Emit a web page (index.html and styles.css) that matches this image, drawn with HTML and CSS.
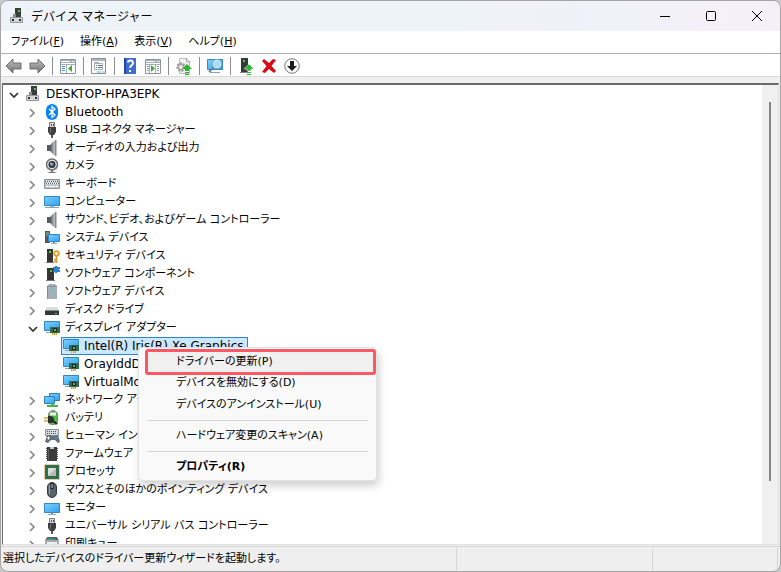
FILE: index.html
```
<!DOCTYPE html>
<html lang="ja">

<head>
    <meta charset="UTF-8">
    <meta name="viewport" content="width=device-width, initial-scale=1">
    <title>デバイス マネージャー</title>
    <link rel="stylesheet" href="styles.css">
</head>

<body>
    <!-- icons -->
    <svg class="sprite" aria-hidden="true">
        <defs>
            <linearGradient id="screen" x1="0" y1="0" x2="1" y2="1">
                <stop offset="0" stop-color="#7fd0ff" />
                <stop offset="1" stop-color="#2ea0ee" />
            </linearGradient>
            <linearGradient id="metal" x1="0" y1="0" x2="1" y2="0">
                <stop offset="0" stop-color="#54585c" />
                <stop offset="1" stop-color="#c4c8cc" />
            </linearGradient>
            <linearGradient id="arrow" x1="0" y1="0" x2="0" y2="1">
                <stop offset="0" stop-color="#c2c2c2" />
                <stop offset="1" stop-color="#707070" />
            </linearGradient>
        </defs>
        <symbol id="i-right" viewBox="0 0 16 16">
            <path d="M5 5l4 4-4 4" fill="none" stroke="#8a8a8a" stroke-width="1.7" />
        </symbol>
        <symbol id="i-down" viewBox="0 0 16 16">
            <path d="M4 7l4 4 4-4" fill="none" stroke="#333" stroke-width="1.7" />
        </symbol>
        <symbol id="i-pc" viewBox="0 0 16 16">
            <path d="M6 0h6v10H6z" fill="#3c3c3c" />
            <path d="M9 2h2v2H9z" fill="#34d943" />
            <path d="M4 6h3v4H4z" fill="#8b8e91" />
            <path d="M1.500 9.500h12v5h-12z" fill="#d5d7d9" stroke="#95989b" />
            <path d="M3 11h2v2H3zM10 11h2v2h-2z" fill="#2d2d2d" />
        </symbol>
        <symbol id="i-bluetooth" viewBox="0 0 16 16">
            <rect x="2" width="12" height="16" rx="6" fill="#0a84f0" />
            <path d="M5 5l6 6-3 2.500V2.500L11 5l-6 6" fill="none" stroke="#fff" stroke-width="1.200" />
        </symbol>
        <symbol id="i-usb" viewBox="0 0 16 16">
            <path d="M5.500.5h5v5h-5z" fill="#ddd" stroke="#777" />
            <path d="M7 2h1v2H7zM9 2h1v2H9z" fill="#555" />
            <path d="M4 5h8v5l-2 3H6l-2-3z" fill="#3f3f3f" />
            <path d="M6 6h1v5H6z" fill="#777" />
            <path d="M7 13h2v3H7z" fill="#555" />
        </symbol>
        <symbol id="i-speaker" viewBox="0 0 16 16">
            <path d="M3 5h3v6H3z" fill="#55585c" />
            <path d="M6 5l5-5v16l-5-5z" fill="url(#metal)" />
            <path d="M11 0h1.500v16H11z" fill="#85898d" />
        </symbol>
        <symbol id="i-camera" viewBox="0 0 16 16">
            <path d="M7 12h2v2H7z" fill="#888" />
            <path d="M3 15q5-3 10 0z" fill="#777" />
            <circle cx="8" cy="6.500" r="5.500" fill="#e3e3e3" stroke="#6f6f6f" stroke-width="1.500" />
            <circle cx="8" cy="6.500" r="3.500" fill="#2d3238" />
            <circle cx="8" cy="6.500" r="1.800" fill="#5d86a8" />
            <circle cx="7" cy="5.500" r=".8" fill="#fff" />
        </symbol>
        <symbol id="i-keyboard" viewBox="0 0 16 16">
            <path d="M.5 3.500h15v9H.5z" fill="#c3c8cd" stroke="#8b9197" />
            <path d="M2 5.500h12M3 7.500h11" stroke="#fff" stroke-dasharray="1 1" />
            <path d="M1 5.500h14M2 7.500h13" stroke="#5c6268" stroke-dasharray="1 1" />
            <path d="M2 10.500h2M5 10.500h6M12 10.500h2" stroke="#fff" />
        </symbol>
        <symbol id="i-computer" viewBox="0 0 16 16">
            <path d="M0 2h16v10H0z" fill="url(#screen)" />
            <path d="M.5 2.500h15v9H.5z" fill="none" stroke="#3389c4" />
            <path d="M6 12h4v1H6z" fill="#9fb3c2" />
            <path d="M1 13.500h14" stroke="#8da3b3" />
        </symbol>
        <symbol id="i-monitor" viewBox="0 0 16 16">
            <path d="M.5 3.500h15v9H.5z" fill="url(#screen)" stroke="#3389c4" />
            <path d="M7 13h2v1H7z" fill="#789" />
            <path d="M4 14.500h8" stroke="#9db0bd" />
        </symbol>
        <symbol id="i-system" viewBox="0 0 16 16">
            <path d="M1 1h5v12H1z" fill="#54585c" />
            <path d="M2 3h3M2 5h3" stroke="#aaa" />
            <path d="M2 2h1v1H2z" fill="#34d943" />
            <path d="M4.500 4.500h11v7h-11z" fill="url(#screen)" stroke="#3187c2" />
            <path d="M9 12h2v1H9z" fill="#789" />
            <path d="M7 13.500h6" stroke="#9db0bd" />
        </symbol>
        <symbol id="i-security" viewBox="0 0 16 16">
            <path d="M3 1h6v13H3z" fill="#343434" />
            <path d="M2 14h8v1H2z" fill="#777" />
            <path d="M5 3h2v2H5z" fill="#34d943" />
            <circle cx="12.500" cy="5.500" r="2.300" fill="none" stroke="#dc9b2d" stroke-width="1.800" />
            <path d="M12.500 8v7M12 11.500h-2M12 13.500h-2" stroke="#dc9b2d" stroke-width="1.600" />
        </symbol>
        <symbol id="i-component" viewBox="0 0 16 16">
            <path d="M3 2h7v12H3z" fill="#343434" />
            <path d="M2 14h9v1H2z" fill="#777" />
            <path d="M6 4h2v2H6z" fill="#34d943" />
            <path d="M9 1h2V0h2v1h3v2h-1v1h1v2h-3v1h-2V6H9V4h1V3H9z" fill="#2c82cf" />
        </symbol>
        <symbol id="i-softdev" viewBox="0 0 16 16">
            <path d="M5 0h6l2 2v13H3V2z" fill="#a8b0b7" />
            <path d="M3 2.500h10M3.500 2v13" stroke="#838c94" />
            <path d="M7 5h2v2H7z" fill="#36d5e5" />
        </symbol>
        <symbol id="i-disk" viewBox="0 0 16 16">
            <path d="M3 5h10l2 4H1z" fill="#d9dbdd" />
            <path d="M1 8.500h14V13H1z" fill="#343638" />
            <path d="M11 11h2v1h-2z" fill="#34d943" />
        </symbol>
        <symbol id="i-display" viewBox="0 0 16 16">
            <path d="M.5 1.500h15v9H.5z" fill="url(#screen)" stroke="#3389c4" />
            <path d="M2 12.500h4" stroke="#8da3b3" />
            <path d="M6 7h10v6H6z" fill="#316b4c" />
            <path d="M9 8h4v4H9z" fill="#1b2b23" />
            <path d="M10 9h2v2h-2z" fill="#75a487" />
            <path d="M8 13h5v2H8z" fill="#dfa320" />
            <path d="M9.500 13v2M11.500 13v2" stroke="#fff" stroke-width=".5" />
        </symbol>
        <symbol id="i-network" viewBox="0 0 16 16">
            <path d="M5.500 1.500h10v7h-10z" fill="url(#screen)" stroke="#2b80ba" />
            <path d="M.5 4.500h10v7H.5z" fill="url(#screen)" stroke="#2b80ba" />
            <path d="M7 11h3v2h4v2H3v-2h4z" fill="#3eb84d" />
        </symbol>
        <symbol id="i-battery" viewBox="0 0 16 16">
            <path d="M7 0h4v2H7z" fill="#999" />
            <rect x="4.500" y="1.500" width="9" height="13" rx="3" fill="#4bbb42" stroke="#7a8a78" />
            <path d="M6 4h6" stroke="#eef8ea" stroke-width="3" />
            <path d="M4 6h2q4 0 4 3.500T6 13H4z" fill="#303030" />
            <path d="M0 8h4M0 11h4" stroke="#c8a743" stroke-width="1.500" />
            <path d="M9 11l4 3" stroke="#222" stroke-width="2" />
        </symbol>
        <symbol id="i-hid" viewBox="0 0 16 16">
            <path d="M1.500 1.500h13v6h-13z" fill="#d9dcdf" stroke="#8b9197" />
            <path d="M3 3.500h10M3 5.500h10" stroke="#555" stroke-dasharray="1 1" />
            <path d="M3 7h3l1 1h4l1-1h2l2 7-2 1-3-3H7l-3 3-3-1z" fill="#656f78" />
            <path d="M3 10h3M4.500 8.500v3" stroke="#fff" />
            <path d="M11 9h2v2h-2z" fill="#3297e0" />
        </symbol>
        <symbol id="i-firmware" viewBox="0 0 16 16">
            <path d="M2 2.500h12M2 4.500h12M2 6.500h12M2 8.500h12M2 10.500h12M2 12.500h12" stroke="#555" />
            <path d="M3 1h10v14H3z" fill="#3a3a3a" />
            <path d="M6 1h4v2H6z" fill="#c9c9c9" />
            <path d="M4.500 3v11" stroke="#5e5e5e" />
        </symbol>
        <symbol id="i-cpu" viewBox="0 0 16 16">
            <path d="M.5.5h15v15H.5z" fill="none" stroke="#b8a75a" stroke-dasharray="1 1" />
            <path d="M1 1h14v14H1z" fill="#356c4c" />
            <path d="M4 4h8v8H4z" fill="#d8dcda" />
            <path d="M4 12l8-8v8z" fill="#b5bcb7" />
        </symbol>
        <symbol id="i-mouse" viewBox="0 0 16 16">
            <rect x="3.500" y=".5" width="9" height="15" rx="4.500" fill="#59616a" stroke="#343a40" />
            <path d="M5.500 3v9" stroke="#98a2ab" />
            <path d="M8 1v6" stroke="#222" stroke-width="3" />
            <path d="M8 2v4" stroke="#b6d9ef" />
        </symbol>
        <symbol id="i-printer" viewBox="0 0 16 16">
            <path d="M3 1h10l2 4H1z" fill="#555a5e" />
            <path d="M1 4h14v8H1z" fill="#a8adb1" />
            <path d="M3 3h8" stroke="#35c68d" />
            <path d="M3 6h10v5H3z" fill="#eee" />
        </symbol>

        <!-- toolbar -->
        <symbol id="t-back" viewBox="0 0 18 18">
            <path d="M1 9l7-7v4h8v6H8v4z" fill="url(#arrow)" stroke="#6c6c6c" />
        </symbol>
        <symbol id="t-next" viewBox="0 0 18 18">
            <path d="M17 9l-7-7v4H2v6h8v4z" fill="url(#arrow)" stroke="#6c6c6c" />
        </symbol>
        <symbol id="t-tree" viewBox="0 0 18 18">
            <path d="M1.500 2.500h15v14h-15z" fill="#fff" stroke="#8b939c" />
            <path d="M2 3h14v3H2z" fill="#a4afba" />
            <path d="M2 4.500h9M13 4.500h1M15 4.500h1" stroke="#fff" />
            <path d="M2 7.500h14M7.500 7v9" stroke="#a4afba" />
            <path d="M3 9.500h3M3 11.500h3M3 13.500h3" stroke="#4c88bb" />
            <path d="M13 8v7l-4-3.500z" fill="#3cae34" />
        </symbol>
        <symbol id="t-props" viewBox="0 0 18 18">
            <path d="M1.500 1.500h14v15h-14z" fill="#fff" stroke="#858d95" />
            <path d="M2 3h13" stroke="#aeb8c2" stroke-width="2" />
            <path d="M4.500 6.500h8v6h-8z" fill="#f3f5f7" stroke="#a8afb6" />
            <path d="M4 5.500h5" stroke="#a8afb6" />
            <path d="M6 8.500h1M8 8.500h4M6 10.500h1M8 10.500h4" stroke="#687b8c" />
            <path d="M7 15h4" stroke="#26b5e8" />
            <path d="M12 15h3" stroke="#aaa" />
        </symbol>
        <symbol id="t-help" viewBox="0 0 18 18">
            <path d="M3 1h12v16H3z" fill="#3f6dd0" />
            <path d="M3 1h2v16H3z" fill="#2348a6" />
            <path d="M7 5.500q0-2 2.500-2T12 6q0 1.500-1.500 2.300T9.300 11" fill="none" stroke="#fff" stroke-width="2" />
            <path d="M8 13h2v2H8z" fill="#fff" />
        </symbol>
        <symbol id="t-action" viewBox="0 0 18 18">
            <path d="M1.500 2.500h15v14h-15z" fill="#fff" stroke="#8b939c" />
            <path d="M2 3h14v3H2z" fill="#a4afba" />
            <path d="M2 4.500h9M13 4.500h1M15 4.500h1" stroke="#fff" />
            <path d="M2 7.500h14M5.500 7v9M11.500 7v9" stroke="#a4afba" />
            <path d="M13 9.500h2M13 11.500h2M13 13.500h2M3 9.500h2M3 11.500h2M3 13.500h2" stroke="#8296a8" />
            <path d="M7 8v7l4-3.500z" fill="#3cae34" />
        </symbol>
        <symbol id="t-scan" viewBox="0 0 18 18">
            <path d="M4.500 1.500h7l3 3v12h-10z" fill="#f1f1f1" stroke="#bbb" />
            <path d="M11.500 1v4h4" fill="none" stroke="#aaa" />
            <circle cx="6" cy="10" r="3.500" fill="#eee" stroke="#999" stroke-width="2.500" stroke-dasharray="2 1" />
            <circle cx="6" cy="10" r="2.500" fill="none" stroke="#999" />
            <path d="M12 7l5 5h-3v2h-4v-2H7z" fill="#27b62e" />
            <path d="M10 15h4v1h-4zM10 17h4v1h-4z" fill="#27b62e" />
        </symbol>
        <symbol id="t-search" viewBox="0 0 18 18">
            <path d="M1.500 2.500h15v10h-15z" fill="url(#screen)" stroke="#3389c4" />
            <path d="M4 15.500h10" stroke="#8da3b3" />
            <path d="M8 10l-5 5" stroke="#72838f" stroke-width="2" />
            <circle cx="11" cy="7" r="4" fill="#a9dcfa" stroke="#d9edf8" stroke-width="1.500" />
            <circle cx="11" cy="7" r="4.600" fill="none" stroke="#6c99b4" stroke-width=".7" />
        </symbol>
        <symbol id="t-update" viewBox="0 0 18 18">
            <path d="M4 1h7v14H4z" fill="#393939" />
            <path d="M3 15h8v1H3z" fill="#888" />
            <path d="M6 3h2v2H6z" fill="#34d943" />
            <path d="M12 7l5 5h-3v2h-4v-2H7z" fill="#27b62e" stroke="#fff" stroke-width=".5" />
            <path d="M10 15h4v1h-4zM10 17h4v1h-4z" fill="#27b62e" />
        </symbol>
        <symbol id="t-delete" viewBox="0 0 18 18">
            <path d="M2 4l2-2 5 4 4-4 3 1-4.500 6L16 14l-2 2-5-4-4 4-3-1 4.500-6z" fill="#d90b16" />
        </symbol>
        <symbol id="t-disable" viewBox="0 0 18 18">
            <circle cx="9" cy="9" r="7.300" fill="#fafafa" stroke="#777" />
            <path d="M7 4h4v5h3l-5 5-5-5h3z" fill="#1c1c1c" />
        </symbol>
    </svg>

    <div class="window">
        <header class="titlebar">
            <svg class="icon"><use href="#i-pc" /></svg>
            <h1>デバイス マネージャー</h1>
            <div class="caption">
                <button aria-label="最小化"><svg viewBox="0 0 12 12"><path d="M1 6.500h10" /></svg></button>
                <button aria-label="最大化"><svg viewBox="0 0 12 12"><rect x="1.500" y="1.500" width="9" height="9" rx="1" /></svg></button>
                <button aria-label="閉じる"><svg viewBox="0 0 12 12"><path d="M1 1l10 10M11 1L1 11" /></svg></button>
            </div>
        </header>

        <nav class="menubar">
            <button>ファイル(<u>F</u>)</button>
            <button>操作(<u>A</u>)</button>
            <button>表示(<u>V</u>)</button>
            <button>ヘルプ(<u>H</u>)</button>
        </nav>

        <div class="toolbar">
            <div class="group">
                <button aria-label="戻る"><svg><use href="#t-back" /></svg></button>
                <button aria-label="進む"><svg><use href="#t-next" /></svg></button>
            </div>
            <div class="group">
                <button aria-label="コンソール ツリー"><svg><use href="#t-tree" /></svg></button>
            </div>
            <div class="group">
                <button aria-label="プロパティ"><svg><use href="#t-props" /></svg></button>
            </div>
            <div class="group">
                <button aria-label="ヘルプ"><svg><use href="#t-help" /></svg></button>
                <button aria-label="操作ウィンドウ"><svg><use href="#t-action" /></svg></button>
            </div>
            <div class="group">
                <button aria-label="ドライバーの更新"><svg><use href="#t-scan" /></svg></button>
            </div>
            <div class="group">
                <button aria-label="ハードウェア変更のスキャン"><svg><use href="#t-search" /></svg></button>
            </div>
            <div class="group">
                <button aria-label="ドライバーの追加"><svg><use href="#t-update" /></svg></button>
                <button aria-label="アンインストール"><svg><use href="#t-delete" /></svg></button>
                <button aria-label="無効にする"><svg><use href="#t-disable" /></svg></button>
            </div>
        </div>

        <main class="pane">
            <ul class="tree">
                <li>
                    <div class="row"><button class="toggle" aria-label="閉じる"><svg><use href="#i-down" /></svg></button><svg class="icon"><use href="#i-pc" /></svg><span class="name latin">DESKTOP-HPA3EPK</span></div>
                    <ul>
                        <li class="row"><button class="toggle" aria-label="開く"><svg><use href="#i-right" /></svg></button><svg class="icon"><use href="#i-bluetooth" /></svg><span class="name latin">Bluetooth</span></li>
                        <li class="row"><button class="toggle" aria-label="開く"><svg><use href="#i-right" /></svg></button><svg class="icon"><use href="#i-usb" /></svg><span class="name">USB コネクタ マネージャー</span></li>
                        <li class="row"><button class="toggle" aria-label="開く"><svg><use href="#i-right" /></svg></button><svg class="icon"><use href="#i-speaker" /></svg><span class="name">オーディオの入力および出力</span></li>
                        <li class="row"><button class="toggle" aria-label="開く"><svg><use href="#i-right" /></svg></button><svg class="icon"><use href="#i-camera" /></svg><span class="name">カメラ</span></li>
                        <li class="row"><button class="toggle" aria-label="開く"><svg><use href="#i-right" /></svg></button><svg class="icon"><use href="#i-keyboard" /></svg><span class="name">キーボード</span></li>
                        <li class="row"><button class="toggle" aria-label="開く"><svg><use href="#i-right" /></svg></button><svg class="icon"><use href="#i-computer" /></svg><span class="name">コンピューター</span></li>
                        <li class="row"><button class="toggle" aria-label="開く"><svg><use href="#i-right" /></svg></button><svg class="icon"><use href="#i-speaker" /></svg><span class="name">サウンド、ビデオ、およびゲーム コントローラー</span></li>
                        <li class="row"><button class="toggle" aria-label="開く"><svg><use href="#i-right" /></svg></button><svg class="icon"><use href="#i-system" /></svg><span class="name">システム デバイス</span></li>
                        <li class="row"><button class="toggle" aria-label="開く"><svg><use href="#i-right" /></svg></button><svg class="icon"><use href="#i-security" /></svg><span class="name">セキュリティ デバイス</span></li>
                        <li class="row"><button class="toggle" aria-label="開く"><svg><use href="#i-right" /></svg></button><svg class="icon"><use href="#i-component" /></svg><span class="name">ソフトウェア コンポーネント</span></li>
                        <li class="row"><button class="toggle" aria-label="開く"><svg><use href="#i-right" /></svg></button><svg class="icon"><use href="#i-softdev" /></svg><span class="name">ソフトウェア デバイス</span></li>
                        <li class="row"><button class="toggle" aria-label="開く"><svg><use href="#i-right" /></svg></button><svg class="icon"><use href="#i-disk" /></svg><span class="name">ディスク ドライブ</span></li>
                        <li>
                            <div class="row"><button class="toggle" aria-label="閉じる"><svg><use href="#i-down" /></svg></button><svg class="icon"><use href="#i-display" /></svg><span class="name">ディスプレイ アダプター</span></div>
                            <ul class="devices">
                                <li class="row selected"><svg class="icon"><use href="#i-display" /></svg><span class="name latin">Intel(R) Iris(R) Xe Graphics</span></li>
                                <li class="row"><svg class="icon"><use href="#i-display" /></svg><span class="name latin">OrayIddDriver Device</span></li>
                                <li class="row"><svg class="icon"><use href="#i-display" /></svg><span class="name latin">VirtualMonitor Device</span></li>
                            </ul>
                        </li>
                        <li class="row"><button class="toggle" aria-label="開く"><svg><use href="#i-right" /></svg></button><svg class="icon"><use href="#i-network" /></svg><span class="name">ネットワーク アダプター</span></li>
                        <li class="row"><button class="toggle" aria-label="開く"><svg><use href="#i-right" /></svg></button><svg class="icon"><use href="#i-battery" /></svg><span class="name">バッテリ</span></li>
                        <li class="row"><button class="toggle" aria-label="開く"><svg><use href="#i-right" /></svg></button><svg class="icon"><use href="#i-hid" /></svg><span class="name">ヒューマン インターフェイス デバイス</span></li>
                        <li class="row"><button class="toggle" aria-label="開く"><svg><use href="#i-right" /></svg></button><svg class="icon"><use href="#i-firmware" /></svg><span class="name">ファームウェア</span></li>
                        <li class="row"><button class="toggle" aria-label="開く"><svg><use href="#i-right" /></svg></button><svg class="icon"><use href="#i-cpu" /></svg><span class="name">プロセッサ</span></li>
                        <li class="row"><button class="toggle" aria-label="開く"><svg><use href="#i-right" /></svg></button><svg class="icon"><use href="#i-mouse" /></svg><span class="name">マウスとそのほかのポインティング デバイス</span></li>
                        <li class="row"><button class="toggle" aria-label="開く"><svg><use href="#i-right" /></svg></button><svg class="icon"><use href="#i-monitor" /></svg><span class="name">モニター</span></li>
                        <li class="row"><button class="toggle" aria-label="開く"><svg><use href="#i-right" /></svg></button><svg class="icon"><use href="#i-usb" /></svg><span class="name">ユニバーサル シリアル バス コントローラー</span></li>
                        <li class="row"><button class="toggle" aria-label="開く"><svg><use href="#i-right" /></svg></button><svg class="icon"><use href="#i-printer" /></svg><span class="name">印刷キュー</span></li>
                    </ul>
                </li>
            </ul>
            <div class="scrollbar">
                <div class="thumb"></div>
            </div>
        </main>

        <footer class="statusbar">
            <p>選択したデバイスのドライバー更新ウィザードを起動します。</p>
            <p></p>
            <p></p>
        </footer>
    </div>

    <div class="context">
        <button class="active">ドライバーの更新(P)</button>
        <button>デバイスを無効にする(D)</button>
        <button>デバイスのアンインストール(U)</button>
        <hr>
        <button>ハードウェア変更のスキャン(A)</button>
        <hr>
        <button class="default">プロパティ(R)</button>
    </div>
</body>

</html>
```
FILE: styles.css
```
* {
    box-sizing: border-box;
}

body {
    margin: 0;
    height: 100vh;
    background-color: #c8c8c8;
    color: #000;
    font-family: "DejaVu Sans", "Noto Sans CJK JP", sans-serif;
    font-size: 11px;
    line-height: 18px;
    font-feature-settings: "palt";
}

button {
    padding: 0;
    border: none;
    background: none;
    color: inherit;
    font: inherit;
    font-feature-settings: inherit;
}

svg {
    display: block;
}

ul {
    margin: 0;
    padding: 0;
    list-style: none;
}

.sprite {
    position: absolute;
    width: 0;
    height: 0;
}

.icon {
    flex: none;
    width: 16px;
    height: 16px;
}

.window {
    display: flex;
    flex-direction: column;
    height: 100vh;
    border: 1px solid #a5a5a8;
    border-radius: 8px;
    background-color: #efefef;
    overflow: hidden;
}

/* title bar */
.titlebar {
    display: flex;
    align-items: center;
    flex: none;
    height: 30px;
    padding-left: 8px;
    background: linear-gradient(90deg, #eef2f9 60%, #f5f0f7);
}

.titlebar h1 {
    flex: 1;
    margin: 0 0 0 6px;
    font-family: "Noto Sans CJK JP", sans-serif;
    font-size: 12px;
    font-weight: normal;
    font-feature-settings: normal;
}

.caption {
    display: flex;
}

.caption button {
    display: flex;
    align-items: center;
    justify-content: center;
    width: 46px;
    height: 30px;
}

.caption svg {
    width: 12px;
    height: 12px;
    fill: none;
    stroke: #000;
}

/* menu and toolbar */
.menubar {
    display: flex;
    flex: none;
    gap: 16px;
    height: 23px;
    padding-left: 10px;
    background-color: #fff;
    border-bottom: 1px solid #b0b0b8;
}

.toolbar {
    display: flex;
    align-items: center;
    flex: none;
    height: 23px;
    padding: 2px 0 0 4px;
    background-color: #fff;
    border-bottom: 1px solid #d9d9d9;
}

.group {
    display: flex;
    gap: 5px;
    padding-right: 6px;
}

.group + .group {
    padding-left: 6px;
    border-left: 1px solid #8c8c8c;
}

.toolbar svg {
    width: 18px;
    height: 18px;
}

/* device tree */
.pane {
    display: flex;
    flex: 1;
    min-height: 0;
    margin: 6px 1px 1px;
    border: 1px solid #e0e0e0;
    border-top: 2px solid #6b6b6b;
    border-left-color: #6b6b6b;
    background-color: #fff;
}

.tree {
    flex: 1;
    overflow: hidden;
}

.tree ul {
    padding-left: 19px;
}

.row {
    display: flex;
    align-items: center;
    height: 18px;
    white-space: nowrap;
}

.toggle {
    display: flex;
    justify-content: center;
    width: 21px;
    margin-right: 1px;
}

.toggle svg {
    width: 16px;
    height: 16px;
}

.name {
    margin-left: 5px;
}

.latin {
    font-size: 12px;
}

.tree .devices {
    padding-left: 39px;
}

.devices .row {
    width: max-content;
    padding: 0 3px 0 1px;
    border: 1px solid transparent;
}

.devices .selected {
    background-color: #cce8ff;
    border-color: #2a86d3;
}

.scrollbar {
    width: 16px;
    padding: 17px 7px 63px;
    background-color: #f0f0f0;
}

.thumb {
    width: 2px;
    height: 100%;
    background-color: #858585;
}

/* status bar */
.statusbar {
    display: grid;
    grid-template-columns: 58fr 25fr 16fr;
    flex: none;
    height: 25px;
    padding: 1px 2px;
    border-top: 1px solid #d5d5d5;
}

.statusbar p {
    margin: 0;
    line-height: 22px;
    border-right: 1px solid #d5d5d5;
}

/* right click menu */
.context {
    position: absolute;
    left: 138px;
    top: 347px;
    width: 239px;
    padding: 1px 2px 2px;
    background-color: #f9f9f9;
    border: 1px solid #e2e2e2;
    border-radius: 5px;
    box-shadow: 2px 5px 8px rgba(0, 0, 0, .18);
}

.context button {
    display: block;
    width: 100%;
    height: 22px;
    padding-left: 35px;
    text-align: left;
}

.context .active {
    width: 231px;
    height: 26px;
    margin: 0 0 -3px 4px;
    padding-left: 28px;
    background-color: #f0f0f0;
    border: 3px solid #fb5866;
    border-radius: 3px;
    line-height: 18px;
}

.context .default {
    font-weight: bold;
}

.context hr {
    height: 1px;
    margin: 4px 6px;
    border: none;
    background-color: #d5d5d5;
}
```
